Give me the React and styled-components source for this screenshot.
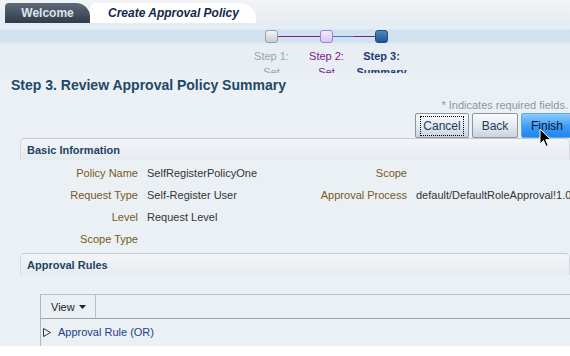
import React from 'react';
import styled, { createGlobalStyle } from 'styled-components';

const Global = createGlobalStyle`
  html, body { margin: 0; padding: 0; background: #ffffff; }
  body { font-family: "Liberation Sans", Arial, sans-serif; }
`;

const Page = styled.div`
  position: relative;
  width: 570px;
  height: 346px;
  overflow: hidden;
  background: #ebf0f4;
  border-bottom: 2px solid #ffffff;
  box-shadow: 0 3px 3px rgba(60, 60, 60, 0.75);
`;

const TabBar = styled.div`
  height: 23px;
  display: flex;
  align-items: flex-end;
  padding-left: 5px;
  background: linear-gradient(#f1f4f7, #e6ecf2);
`;

const Tab = styled.div`
  height: 20px;
  display: flex;
  align-items: center;
  box-sizing: border-box;
  font-size: 12px;
  font-weight: bold;
  ${p => p.active ? `
    width: 166px;
    padding-left: 18px;
    background: #ffffff;
    color: #15284a;
    font-style: italic;
    border-radius: 6px 16px 0 0;
  ` : `
    width: 85px;
    justify-content: center;
    background: linear-gradient(#5f6b78, #2f3b48);
    color: #dde3ea;
    border-radius: 4px 14px 0 0;
  `}
`;

const TrainArea = styled.div`
  height: 50px;
  overflow: hidden;
  background: linear-gradient(#e4ecf4 0px, #e4ecf4 6px, #d1e1f0 7px, #d3e2f1 19px, #e3eaf2 20px, #e8eef4 24px);
`;

const Train = styled.div`
  display: flex;
  padding-left: 244px;
  padding-top: 6px;
`;

const Stop = styled.div`
  width: 55px;
  display: flex;
  flex-direction: column;
  align-items: stretch;
`;

const Track = styled.div`
  display: flex;
  align-items: center;
  height: 14px;
`;

const Rail = styled.div`
  flex: 1;
  height: 1px;
  background: ${p => p.color || 'transparent'};
`;

const Node = styled.div`
  width: 11px;
  height: 11px;
  border-radius: 3px;
  border: 1px solid ${p => p.border};
  background: ${p => p.bg};
`;

const StopLabel = styled.div`
  margin-top: 5px;
  text-align: center;
  font-size: 11px;
  line-height: 16px;
  white-space: nowrap;
  color: ${p => p.color};
  font-weight: ${p => (p.current ? 'bold' : 'normal')};
`;

const Title = styled.h1`
  margin: 0;
  padding: 4px 0 0 11px;
  height: 20px;
  font-size: 14px;
  font-weight: bold;
  color: #1d4868;
  line-height: 16px;
`;

const Required = styled.div`
  text-align: right;
  padding: 1px 2px 0 0;
  font-size: 11px;
  color: #8e979f;
  line-height: 14px;
`;

const ButtonRow = styled.div`
  display: flex;
  justify-content: flex-end;
  gap: 3px;
  margin-top: 1px;
  margin-right: -3px;
`;

const Button = styled.button`
  width: ${p => p.w}px;
  height: 25px;
  padding: 0;
  font-family: inherit;
  font-size: 12px;
  border: 1px solid ${p => (p.primary ? '#5fa8e8' : '#8c949d')};
  border-radius: 2px;
  color: ${p => (p.primary ? '#0b1626' : '#1c3d5a')};
  background: ${p => (p.primary
    ? 'linear-gradient(#8dcbff, #3a9cf6 55%, #1d86ee)'
    : 'linear-gradient(#fbfcfd, #e2e8f0 55%, #c9d3e1)')};
`;

const FocusText = styled.span`
  padding: 1px 1px;
  outline: 1px dotted #000;
  outline-offset: 1px;
`;

const Panel = styled.section`
  margin-left: 20px;
  margin-top: ${p => p.gap || 0}px;
`;

const PanelHeader = styled.div`
  height: 21px;
  display: flex;
  align-items: center;
  padding-left: 6px;
  border-top: 1px solid #c3cad3;
  border-left: 1px solid #d3d9e0;
  border-right: 1px solid #d3d9e0;
  border-radius: 5px 5px 0 0;
  background: linear-gradient(#f3f5f8, #e6ebf0);
  font-size: 11px;
  font-weight: bold;
  color: #1b4466;
`;

const Fields = styled.div`
  display: grid;
  grid-template-columns: 267px auto;
  grid-auto-rows: 22px;
  padding-top: 2px;
  font-size: 11px;
`;

const Field = styled.div`
  display: flex;
  align-items: center;
`;

const Label = styled.span`
  width: ${p => p.w}px;
  text-align: right;
  margin-right: 9px;
  color: #76591b;
  flex-shrink: 0;
`;

const Value = styled.span`
  color: #343434;
  white-space: nowrap;
`;

const RulesBody = styled.div`
  padding: 19px 0 0 20px;
`;

const Table = styled.div`
  border-top: 1px solid #b9c1cc;
  border-left: 1px solid #b0b7bf;
  height: 60px;
`;

const Toolbar = styled.div`
  height: 23px;
  display: flex;
  border-bottom: 1px solid #9fa6ae;
`;

const ViewMenu = styled.div`
  width: 55px;
  display: flex;
  align-items: center;
  padding-left: 10px;
  box-sizing: border-box;
  border-right: 1px solid #b9c1cc;
  font-size: 11px;
  color: #222;
  gap: 4px;
`;

const Row = styled.div`
  height: 26px;
  display: flex;
  align-items: center;
  padding-left: 2px;
  gap: 7px;
  font-size: 11px;
  color: #1b3f8b;
`;

const Cursor = styled.svg`
  position: absolute;
  left: 539px;
  top: 128px;
`;

const fieldsData = [
  ['Policy Name', 'SelfRegisterPolicyOne', 'Scope', ''],
  ['Request Type', 'Self-Register User', 'Approval Process', 'default/DefaultRoleApproval!1.0'],
  ['Level', 'Request Level', '', ''],
  ['Scope Type', '', '', ''],
];

export default function App() {
  return (
    <Page>
      <Global />
      <TabBar>
        <Tab>Welcome</Tab>
        <Tab active>Create Approval Policy</Tab>
      </TabBar>
      <TrainArea>
        <Train>
          <Stop>
            <Track>
              <Rail />
              <Node border="#9a9fa6" bg="linear-gradient(#f4f4f4, #c9ccd0)" />
              <Rail color="#7b1f86" />
            </Track>
            <StopLabel color="#9ca4ad">Step 1:<br />Set</StopLabel>
          </Stop>
          <Stop>
            <Track>
              <Rail color="#7b1f86" />
              <Node border="#a57fd6" bg="linear-gradient(#f1ebfb, #d6c6f0)" />
              <Rail color="#3f74c9" />
            </Track>
            <StopLabel color="#7a1c8a">Step 2:<br />Set</StopLabel>
          </Stop>
          <Stop>
            <Track>
              <Rail color="#7b1f86" />
              <Node border="#1d4f84" bg="linear-gradient(#4f88c0, #1c5690)" />
              <Rail />
            </Track>
            <StopLabel color="#1c3c72" current>Step 3:<br />Summary</StopLabel>
          </Stop>
        </Train>
      </TrainArea>
      <Title>Step 3. Review Approval Policy Summary</Title>
      <Required>* Indicates required fields.</Required>
      <ButtonRow>
        <Button w={54}><FocusText>Cancel</FocusText></Button>
        <Button w={46}>Back</Button>
        <Button w={52} primary>Finish</Button>
      </ButtonRow>
      <Panel>
        <PanelHeader>Basic Information</PanelHeader>
        <Fields>
          {fieldsData.map(([l1, v1, l2, v2]) => (
            <React.Fragment key={l1}>
              <Field>
                <Label w={118}>{l1}</Label>
                <Value>{v1}</Value>
              </Field>
              <Field>
                <Label w={120}>{l2}</Label>
                <Value>{v2}</Value>
              </Field>
            </React.Fragment>
          ))}
        </Fields>
      </Panel>
      <Panel gap={3}>
        <PanelHeader>Approval Rules</PanelHeader>
        <RulesBody>
          <Table>
            <Toolbar>
              <ViewMenu>
                View
                <svg width="7" height="4" viewBox="0 0 7 4"><path d="M0 0h7L3.5 4z" fill="#222" /></svg>
              </ViewMenu>
            </Toolbar>
            <Row>
              <svg width="8" height="9" viewBox="0 0 8 9">
                <path d="M0.5 0.5L7.5 4.5L0.5 8.5z" fill="none" stroke="#333" />
              </svg>
              Approval Rule (OR)
            </Row>
          </Table>
        </RulesBody>
      </Panel>
      <Cursor width="14" height="20" viewBox="0 0 14 20">
        <path d="M1 1v15l3.5-3.5 2.5 6 2.2-1-2.5-5.8H12z" fill="#000" stroke="#fff" strokeWidth="1" />
      </Cursor>
    </Page>
  );
}
